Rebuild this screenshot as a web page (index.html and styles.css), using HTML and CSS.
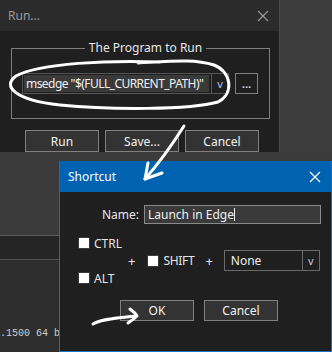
FILE: index.html
```html
<!DOCTYPE html>
<html lang="en">
<head>
    <meta charset="UTF-8">
    <meta name="viewport" content="width=device-width, initial-scale=1.0">
    <title>Run... / Shortcut</title>
    <link rel="stylesheet" href="styles.css">
</head>
<body>

    <div class="desk">

        <!-- Editor window behind the dialogs -->
        <div class="editor">
            <div class="ed-top"></div>
            <div class="ed-tabs"></div>
            <div class="ed-code">.1500 64 b</div>
        </div>

        <!-- Run dialog -->
        <div class="win run-win">
            <div class="titlebar">
                <span class="title">Run...</span>
                <svg class="close" width="12" height="12" viewBox="0 0 12 12">
                    <path d="M1 1 L11 11 M11 1 L1 11" stroke="currentColor" stroke-width="1.1" fill="none"/>
                </svg>
            </div>
            <div class="run-body">
                <fieldset class="group">
                    <legend>The Program to Run</legend>
                    <div class="prog-row">
                        <div class="combo prog-combo">
                            <div class="combo-edit">msedge "$(FULL_CURRENT_PATH)"</div>
                            <div class="combo-btn">v</div>
                        </div>
                        <button class="btn browse">...</button>
                    </div>
                </fieldset>
                <div class="btn-row">
                    <button class="btn">Run</button>
                    <button class="btn">Save...</button>
                    <button class="btn">Cancel</button>
                </div>
            </div>
        </div>

        <!-- Shortcut dialog -->
        <div class="win shortcut-win">
            <div class="titlebar blue">
                <span class="title">Shortcut</span>
                <svg class="close" width="12" height="12" viewBox="0 0 12 12">
                    <path d="M1 1 L11 11 M11 1 L1 11" stroke="currentColor" stroke-width="1.2" fill="none"/>
                </svg>
            </div>
            <div class="sc-body">
                <div class="name-row">
                    <label class="name-label">Name:</label>
                    <div class="text-input">Launch in Edge<span class="caret"></span></div>
                </div>
                <div class="mods">
                    <div class="mod-col">
                        <div class="check"><span class="box"></span>CTRL</div>
                        <div class="check"><span class="box"></span>ALT</div>
                    </div>
                    <span class="plus">+</span>
                    <div class="check shift"><span class="box"></span>SHIFT</div>
                    <span class="plus plus2">+</span>
                    <div class="combo key-combo">
                        <div class="combo-edit">None</div>
                        <div class="combo-btn">v</div>
                    </div>
                </div>
                <div class="sc-buttons">
                    <button class="btn">OK</button>
                    <button class="btn">Cancel</button>
                </div>
            </div>
        </div>

        <!-- Hand drawn marks -->
        <svg class="ink" width="332" height="352" viewBox="0 0 332 352">
            <path d="M160 62 C110 60 40 63 16 76 C2 86 14 100 60 105 C110 110 190 110 218 102 C234 94 232 72 214 65 C195 59 175 61 138 63"/>
            <path d="M184 126 C172 145 160 162 145 179"/>
            <path d="M148 163 L145 179 L162 173"/>
            <path d="M93 324 C104 318 120 318 136 316"/>
            <path d="M130 309 C134 312 136 314 137 316 C134 319 131 321 128 323"/>
        </svg>

    </div>

</body>
</html>
```

FILE: styles.css
```css
/* Page and desktop */
body {
    margin: 0;
    padding: 0;
    font-family: "Segoe UI", "Noto Sans", sans-serif;
    font-size: 12px;
    background-color: #3c3c3c;
}

.desk {
    position: relative;
    width: 332px;
    height: 352px;
    overflow: hidden;
    background-color: #3c3c3c;
}

/* Editor behind */
.editor {
    position: absolute;
    left: 0;
    top: 152px;
    width: 332px;
    height: 200px;
    display: flex;
    flex-direction: column;
}

.ed-top {
    height: 83px;
    background-color: #3b3b3b;
    border-bottom: 1px solid #5a5a5a;
}

.ed-tabs {
    height: 23px;
    background-color: #252525;
    border-bottom: 1px solid #555555;
}

.ed-code {
    flex: 1;
    background-color: #2e2e2e;
    color: #cfcfcf;
    font-family: "Liberation Mono", "DejaVu Sans Mono", monospace;
    font-size: 10px;
    line-height: 14px;
    padding-top: 67px;
    white-space: pre;
}

/* Windows */
.win {
    position: absolute;
    background-color: #1f1f1f;
    color: #e6e6e6;
    box-sizing: border-box;
}

.titlebar {
    height: 31px;
    display: flex;
    align-items: center;
    justify-content: space-between;
    padding: 0 10px 0 8px;
    background-color: #2b2b2b;
    color: #9a9a9a;
}

.titlebar.blue {
    background-color: #0063b1;
    color: #ffffff;
}

.title {
    font-size: 12px;
}

.close {
    display: block;
}

/* Run dialog */
.run-win {
    left: 0;
    top: 0;
    width: 280px;
    height: 152px;
    border-right: 1px solid #4a4a4a;
}

.run-body {
    padding-top: 9px;
}

.group {
    margin: 0 0 0 11px;
    width: 259px;
    box-sizing: border-box;
    border: 1px solid #7d7d7d;
    padding: 17px 0 24px 10px;
}

.group legend {
    margin: 0 auto;
    padding: 0 4px;
    line-height: 16px;
    color: #e8e8e8;
}

.prog-row {
    display: flex;
    align-items: center;
}

.combo {
    display: flex;
    height: 21px;
    box-sizing: border-box;
    border: 1px solid #555555;
}

.combo-edit {
    flex: 1;
    display: flex;
    align-items: center;
    padding-left: 3px;
    color: #f0f0f0;
    white-space: nowrap;
    overflow: hidden;
}

.combo-btn {
    width: 16px;
    border-left: 1px solid #555555;
    display: flex;
    align-items: center;
    justify-content: center;
    color: #a9c4e8;
    font-size: 11px;
}

.prog-combo {
    width: 207px;
}

.prog-combo .combo-edit {
    margin: 1px 2px 1px 1px;
    padding-left: 2px;
    background-color: #3a3a3a;
    letter-spacing: -0.55px;
}

.btn {
    font-family: inherit;
    font-size: 12px;
    color: #f2f2f2;
    background-color: #333333;
    border: 1px solid #808080;
    height: 22px;
    width: 74px;
    padding: 0;
    box-sizing: border-box;
}

.browse {
    width: 23px;
    height: 21px;
    margin-left: 6px;
    background-color: #1f1f1f;
    line-height: 14px;
}

.btn-row {
    display: flex;
    gap: 6px;
    margin: 11px 0 0 25px;
}

/* Shortcut dialog */
.shortcut-win {
    left: 59px;
    top: 161px;
    width: 273px;
    height: 191px;
    border: 1px solid #1a6cbc;
    border-top: 0;
}

.sc-body {
    padding: 13px 10px 0 18px;
}

.name-row {
    display: flex;
    justify-content: flex-end;
    align-items: center;
}

.name-label {
    margin-right: 5px;
}

.text-input {
    width: 177px;
    height: 19px;
    box-sizing: border-box;
    border: 1px solid #8a8a8a;
    background-color: #3a3a3a;
    padding-left: 3px;
    display: flex;
    align-items: center;
    color: #f0f0f0;
}

.caret {
    width: 1px;
    height: 13px;
    background-color: #f0f0f0;
}

.mods {
    display: flex;
    align-items: center;
    margin-top: 11px;
}

.mod-col {
    width: 48px;
    display: flex;
    flex-direction: column;
    gap: 19px;
}

.check {
    display: flex;
    align-items: center;
    height: 16px;
    white-space: nowrap;
}

.box {
    width: 12px;
    height: 12px;
    box-sizing: border-box;
    background-color: #ffffff;
    border: 1px solid #3a3a3a;
    margin-right: 4px;
}

.plus {
    margin-left: 2px;
    font-size: 13px;
}

.shift {
    margin-left: 12px;
    letter-spacing: -0.3px;
}

.plus2 {
    margin-left: 11px;
}

.key-combo {
    width: 96px;
    margin-left: 11px;
    border-color: #6a6a6a;
}

.key-combo .combo-edit {
    padding-left: 6px;
}

.key-combo .combo-btn {
    border-left-color: #6a6a6a;
    color: #c3c3e0;
}

.sc-buttons {
    display: flex;
    gap: 10px;
    margin: 14px 0 0 42px;
}

.sc-buttons .btn {
    height: 21px;
}

/* Hand drawn marks */
.ink {
    position: absolute;
    left: 0;
    top: 0;
    pointer-events: none;
}

.ink path {
    fill: none;
    stroke: #ffffff;
    stroke-width: 3;
    stroke-linecap: round;
    stroke-linejoin: round;
}
```
